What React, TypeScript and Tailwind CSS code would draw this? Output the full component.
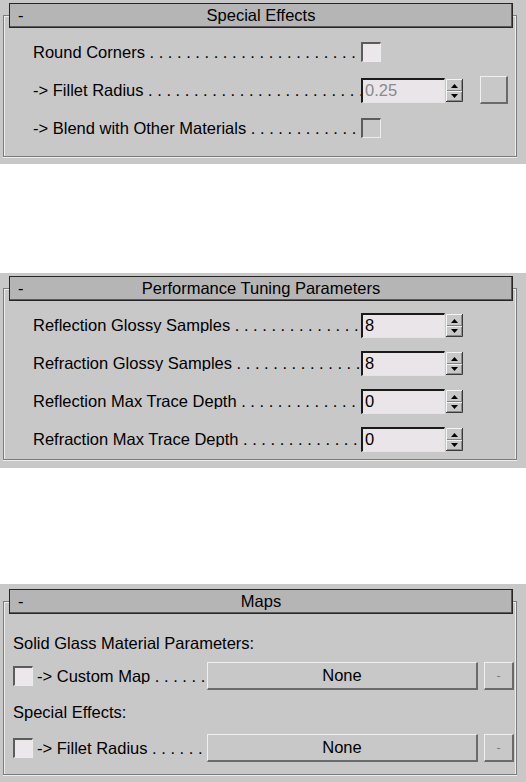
import React from 'react';

// leader dots: nbsp so the first gap after the label is kept
const DOTS = '\u00a0.'.repeat(80);

function Header({ title }: { title: string }) {
  return (
    <div className="relative z-10 ml-[5px] mr-[3px] -mt-[13px] h-[25px] bg-[#b5b5b5] border border-[#262626] shadow-[inset_-1px_-1px_0_#5a5a5a] grid grid-cols-[1fr_auto_1fr] items-center text-black">
      <span className="pl-[8px] leading-none">-</span>
      <span className="leading-none">{title}</span>
      <span />
    </div>
  );
}

function Rollout({ title, className, frameClass, children }: { title: string; className: string; frameClass: string; children: React.ReactNode }) {
  return (
    <div className={`bg-[#c8c8c8] pl-[3px] pr-[9px] ${className}`}>
      <div className={`border border-[#7c7c7c] shadow-[inset_1px_1px_0_#ededed,inset_-1px_0_0_#ededed,0_1px_0_#ededed] ${frameClass}`}>
        <Header title={title} />
        {children}
      </div>
    </div>
  );
}

function Check({ disabled }: { disabled?: boolean }) {
  return (
    <div
      className={`w-[20px] h-[20px] shrink-0 border-t-2 border-l-2 border-t-[#5c5c5c] border-l-[#5c5c5c] border-b border-r border-b-[#ececec] border-r-[#ececec] ${
        disabled ? 'bg-[#c8c8c8]' : 'bg-[#ebe7eb]'
      }`}
    />
  );
}

function Spinner() {
  return (
    <svg width="17" height="23" viewBox="0 0 17 23" className="shrink-0">
      <rect x="0" y="0" width="17" height="23" fill="#c8c8c8" />
      <path d="M0.5 22V0.5H16" stroke="#f4f4f4" fill="none" />
      <path d="M0 22.5H16.5V0" stroke="#3c3c3c" fill="none" />
      <path d="M1 21.5H15.5V1" stroke="#8a8a8a" fill="none" />
      <line x1="1" y1="11.5" x2="16" y2="11.5" stroke="#808080" />
      <line x1="1" y1="12.5" x2="16" y2="12.5" stroke="#f0f0f0" />
      <path d="M5 9L8.5 5L12 9Z" fill="#000" />
      <path d="M5 15L8.5 19L12 15Z" fill="#000" />
    </svg>
  );
}

function Field({ value, disabled }: { value: string; disabled?: boolean }) {
  return (
    <div className="flex items-center gap-[1px]">
      <div
        className={`w-[84px] h-[25px] bg-[#e9e5e9] border-t-2 border-l-2 border-t-[#1a1a1a] border-l-[#1a1a1a] border-b border-r border-b-[#e4e4e4] border-r-[#e4e4e4] flex items-center pl-[2px] leading-none ${
          disabled ? 'text-[#8a8a8a]' : 'text-black'
        }`}
      >
        {value}
      </div>
      <Spinner />
    </div>
  );
}

function Label({ text, className }: { text: string; className: string }) {
  return (
    <div className={`flex items-center overflow-hidden whitespace-nowrap leading-none ${className}`}>
      <span className="shrink-0">{text}</span>
      <span className="overflow-hidden">{DOTS}</span>
    </div>
  );
}

function Row({ label, children }: { label: string; children?: React.ReactNode }) {
  return (
    <div className="h-[38px] flex items-center">
      <Label text={label} className="w-[328px]" />
      {children}
    </div>
  );
}

const raised =
  'bg-[#c8c8c8] border-t border-l border-t-[#f0f0f0] border-l-[#f0f0f0] border-b-2 border-r-2 border-b-[#6a6a6a] border-r-[#6a6a6a]';

function MapRow({ label }: { label: string }) {
  return (
    <div className="h-[36px] flex items-center">
      <Check />
      <Label text={'-> ' + label} className="ml-[4px] w-[170px]" />
      <div className={`w-[271px] h-[28px] flex items-center justify-center leading-none ${raised}`}>None</div>
      <div className={`ml-[6px] w-[30px] h-[28px] flex items-center justify-center text-[11px] text-[#6a6a6a] leading-none ${raised}`}>
        -
      </div>
    </div>
  );
}

export default function App() {
  return (
    <div className="w-[526px] h-[782px] bg-white flex flex-col text-[16.5px] text-black font-['Liberation_Sans',Arial,sans-serif] overflow-hidden">
      <Rollout title="Special Effects" className="pt-[15px] pb-[7px]" frameClass="pb-[9px]">
        <div className="pl-[29px] pt-[5px]">
          <Row label="Round Corners">
            <Check />
          </Row>
          <Row label="-> Fillet Radius">
            <Field value="0.25" disabled />
            <div className={`ml-[17px] w-[28px] h-[28px] ${raised}`} />
          </Row>
          <Row label="-> Blend with Other Materials">
            <Check disabled />
          </Row>
        </div>
      </Rollout>

      <Rollout title="Performance Tuning Parameters" className="mt-[109px] pt-[15px] pb-[8px]" frameClass="pb-[1px]">
        <div className="pl-[29px] pt-[5px]">
          <Row label="Reflection Glossy Samples">
            <Field value="8" />
          </Row>
          <Row label="Refraction Glossy Samples">
            <Field value="8" />
          </Row>
          <Row label="Reflection Max Trace Depth">
            <Field value="0" />
          </Row>
          <Row label="Refraction Max Trace Depth">
            <Field value="0" />
          </Row>
        </div>
      </Rollout>

      <Rollout title="Maps" className="mt-[116px] pt-[17px] flex-1" frameClass="pb-[8px]">
        <div className="pl-[9px] pt-[14px]">
          <div className="h-[30px] flex items-center leading-none">Solid Glass Material Parameters:</div>
          <MapRow label="Custom Map" />
          <div className="h-[36px] flex items-center leading-none">Special Effects:</div>
          <MapRow label="Fillet Radius" />
        </div>
      </Rollout>
    </div>
  );
}
